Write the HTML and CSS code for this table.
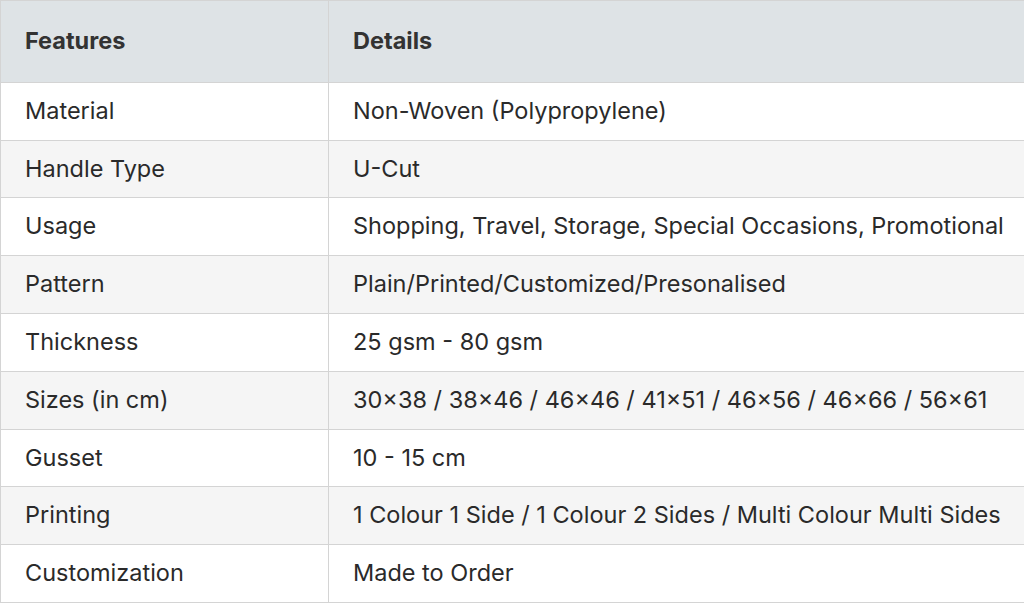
FILE: index.html
```html
<!DOCTYPE html>
<html>
<head>
<meta charset="utf-8">
<link rel="stylesheet" href="styles.css">
</head>
<body>
<div class="wrap">
<table class="spec">
<thead>
<tr><th class="c1">Features</th><th>Details</th></tr>
</thead>
<tbody>
<tr><td class="c1">Material</td><td>Non-Woven (Polypropylene)</td></tr>
<tr><td class="c1">Handle Type</td><td>U-Cut</td></tr>
<tr><td class="c1">Usage</td><td>Shopping, Travel, Storage, Special Occasions, Promotional</td></tr>
<tr><td class="c1">Pattern</td><td>Plain/Printed/Customized/Presonalised</td></tr>
<tr><td class="c1">Thickness</td><td>25 gsm - 80 gsm</td></tr>
<tr><td class="c1">Sizes (in cm)</td><td>30×38 / 38×46 / 46×46 / 41×51 / 46×56 / 46×66 / 56×61</td></tr>
<tr><td class="c1">Gusset</td><td>10 - 15 cm</td></tr>
<tr><td class="c1">Printing</td><td>1 Colour 1 Side / 1 Colour 2 Sides / Multi Colour Multi Sides</td></tr>
<tr><td class="c1">Customization</td><td>Made to Order</td></tr>
</tbody>
</table>
</div>
</body>
</html>
```
FILE: styles.css
```css
html, body {
  margin: 0;
  padding: 0;
  background: #fff;
  overflow: hidden;
}
.wrap {
  width: 1024px;
  overflow: hidden;
}
.spec {
  border-collapse: collapse;
  width: 1080px;
  font-family: Inter, "Liberation Sans", sans-serif;
  font-size: 23.5px;
  line-height: 28.8px;
  color: #2a2a2a;
}
.spec th, .spec td {
  border: 1px solid #d4d4d4;
  text-align: left;
  padding: 14px 24px;
  white-space: nowrap;
}
.spec th {
  background: #dee3e6;
  font-weight: 700;
  color: #333;
  padding: 26px 24px;
}
.spec .c1 {
  width: 279px;
}
.spec tbody tr:nth-child(even) td {
  background: #f5f5f5;
}
```
